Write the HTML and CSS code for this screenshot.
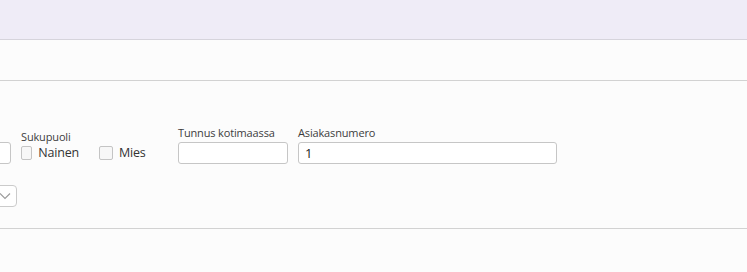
FILE: index.html
```html
<!DOCTYPE html>
<html lang="fi">
<head>
    <meta charset="utf-8">
    <title>Asiakas</title>
    <link rel="stylesheet" href="styles.css">
</head>
<body>
    <div class="top-bar"></div>
    <div class="tool-bar"></div>

    <div class="form-section">
        <div class="form-scroll">
            <div class="form-row">
                <div class="field field-cut">
                    <label class="field-label">Sukunimi</label>
                    <input type="text" class="text-input">
                </div>
                <div class="field field-gender">
                    <span class="field-label">Sukupuoli</span>
                    <div class="check-group">
                        <label class="check check-first"><span class="check-box"></span>Nainen</label>
                        <label class="check"><span class="check-box"></span>Mies</label>
                    </div>
                </div>
                <div class="field field-home">
                    <label class="field-label">Tunnus kotimaassa</label>
                    <input type="text" class="text-input">
                </div>
                <div class="field field-number">
                    <label class="field-label">Asiakasnumero</label>
                    <input type="text" class="text-input" value="1">
                </div>
            </div>
            <div class="form-row">
                <div class="field field-select">
                    <div class="select-box">
                        <svg class="chevron" width="12" height="8" viewBox="0 0 12 8">
                            <path d="M1 1.5 L6 6.5 L11 1.5" fill="none" stroke="#9a9a9a" stroke-width="1.1"/>
                        </svg>
                    </div>
                </div>
            </div>
        </div>
    </div>
</body>
</html>
```

FILE: styles.css
```css
body {
    margin: 0;
    background-color: #fcfcfc;
    font-family: "Open Sans", "Noto Sans", sans-serif;
    color: #3a3a3a;
    overflow: hidden;
}
.top-bar {
    height: 39px;
    background-color: #efecf7;
    border-bottom: 1px solid #d6d4dc;
}
.tool-bar {
    height: 40px;
    border-bottom: 1px solid #d2d2d2;
}
.form-section {
    height: 147px;
    border-bottom: 1px solid #d2d2d2;
    overflow: hidden;
}
.form-scroll {
    margin-left: -90px;
    padding-top: 45px;
}
.form-row {
    display: flex;
    align-items: flex-end;
    gap: 10px;
}
.form-row + .form-row {
    margin-top: 21px;
}
.field {
    display: flex;
    flex-direction: column;
}
.field-label {
    font-size: 11px;
    line-height: 14px;
    margin-bottom: 2px;
    color: #3c3c3c;
    letter-spacing: -0.15px;
}
.text-input {
    box-sizing: border-box;
    height: 22px;
    border: 1px solid #c6c6c6;
    border-radius: 3px;
    background-color: #fff;
    padding: 0 6px;
    font-family: inherit;
    font-size: 13px;
    color: #222;
}
.field-cut .text-input {
    width: 101px;
}
.field-cut .field-label {
    visibility: hidden;
}
.field-gender {
    width: 147px;
}
.field-gender .field-label {
    margin-bottom: -3px;
}
.check-group {
    display: flex;
    gap: 20px;
    height: 23px;
    align-items: center;
}
.check {
    display: flex;
    align-items: center;
    gap: 6px;
    font-size: 12.5px;
    letter-spacing: -0.2px;
    color: #333;
}
.check-first {
    width: 58px;
}
.check-box {
    box-sizing: border-box;
    width: 14px;
    height: 14px;
    border: 1px solid #c4c4c4;
    border-radius: 2px;
    background-color: #f7f7f7;
}
.field-home .text-input {
    width: 110px;
}
.field-number .text-input {
    width: 259px;
}
.select-box {
    box-sizing: border-box;
    width: 107px;
    height: 22px;
    border: 1px solid #cbcbcb;
    border-radius: 4px;
    background-color: #fff;
    display: flex;
    align-items: center;
    justify-content: flex-end;
    padding-right: 5px;
}
.chevron {
    display: block;
}
```
